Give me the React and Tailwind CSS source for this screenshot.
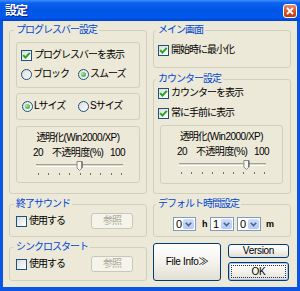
import React from 'react';

// XP-style "設定" dialog

const Check = ({ checked }) => (
  <span className="w-[11px] h-[11px] shrink-0 border border-[#1C5180] bg-linear-to-br from-[#DCDCD7] to-white flex items-center justify-center">
    {checked && (
      <svg width="9" height="9" viewBox="0 0 9 9">
        <path d="M1.2 4.2 L3.4 6.6 L7.8 1.8" fill="none" stroke="#21A121" strokeWidth="1.9" />
      </svg>
    )}
  </span>
);

const Radio = ({ checked }) => (
  <span className="w-[11px] h-[11px] shrink-0 rounded-full border border-[#1C5180] bg-linear-to-br from-[#DCDCD7] to-white flex items-center justify-center">
    {checked && (
      <span className="w-[5px] h-[5px] rounded-full bg-[radial-gradient(circle_at_35%_35%,#A8E59C,#21A121)]" />
    )}
  </span>
);

const CheckRow = ({ checked, label, className = '' }) => (
  <div className={`flex items-center gap-[2px] h-[12px] ${className}`}>
    <Check checked={checked} />
    <span>{label}</span>
  </div>
);

const RadioItem = ({ checked, label, className = '' }) => (
  <div className={`flex items-center gap-[1px] ${className}`}>
    <Radio checked={checked} />
    <span>{label}</span>
  </div>
);

const Group = ({ label, className = '', children }) => (
  <fieldset className={`border border-[#D0D0BF] rounded-[3px] ${className}`}>
    <legend className="px-[2px] -ml-[2px] leading-[12px] text-[#0046D5]">{label}</legend>
    {children}
  </fieldset>
);

// trackbar, 20..100
const Slider = ({ value, className = '' }) => {
  const x = 2 + ((value - 20) / 80) * 83;
  const ticks = Array.from({ length: 9 }, (_, i) => Math.round(2 + (i * 83) / 8));
  return (
    <svg width="88" height="15" className={`block ${className}`}>
      <rect x="0" y="4" width="87" height="1" fill="#A2A192" />
      <rect x="0" y="5" width="87" height="1" fill="#DAD8CC" />
      <rect x="0" y="6" width="87" height="1" fill="#FFFFFF" />
      {ticks.map((t) => (
        <rect key={t} x={t} y="13" width="1" height="2" fill="#6F6F6F" />
      ))}
      <path
        d={`M${x - 2.5} 1.5 H${x + 2.5} V8 L${x} 10.5 L${x - 2.5} 8 Z`}
        fill="#F6F6F2"
        stroke="#8A8A84"
      />
      <line x1={x + 2.5} y1="1.5" x2={x + 2.5} y2="8" stroke="#55554F" />
    </svg>
  );
};

const Opacity = ({ value, sliderClass, className = '' }) => (
  <div className={`border border-[#D0D0BF] rounded-[3px] ${className}`}>
    <div className="text-center mt-[5px]">
      透明化<span className="tracking-[-0.5px]">(Win2000/XP)</span>
    </div>
    <div className="flex pl-[16px] mt-[3px] tracking-[-0.6px]">
      <span className="w-[19px]">20</span>
      <span className="w-[58px]">不透明度(%)</span>
      <span>100</span>
    </div>
    <Slider value={value} className={`mt-[1px] ${sliderClass}`} />
  </div>
);

const Combo = ({ value, className = '' }) => (
  <div className={`flex h-[14px] border border-[#7F9DB9] bg-white p-[1px] ${className}`}>
    <span className="flex-1 pl-[1px] leading-[11px] text-[11px]">{value}</span>
    <span className="w-[11px] h-full rounded-[2px] bg-linear-to-b from-[#CFDDFC] to-[#B1C8F8] flex items-center justify-center">
      <svg width="7" height="5" viewBox="0 0 7 5">
        <path d="M0.8 0.8 L3.5 3.5 L6.2 0.8" fill="none" stroke="#4D6185" strokeWidth="1.6" />
      </svg>
    </span>
  </div>
);

const btn =
  'border border-[#003C74] rounded-[3px] bg-linear-to-b from-white via-[#F4F3EE] to-[#E2DFD2] flex items-center justify-center tracking-[-0.3px]';

const Disabled = ({ label }) => (
  <div className="w-[42px] h-[16px] border border-[#C9C7BA] rounded-[3px] bg-[#F5F4EA] text-[#ACA899] flex items-center justify-center">
    {label}
  </div>
);

export default function App() {
  return (
    <div className="w-[300px] h-[291px] flex flex-col bg-[#0A55E3] font-['Liberation_Sans','Noto_Sans_CJK_JP',sans-serif] text-[10px] leading-[12px] tracking-[-1px] text-black">
      {/* title bar */}
      <div className="h-[21px] shrink-0 flex items-center justify-between pl-[5px] pr-[3px] bg-[linear-gradient(to_bottom,#3D8EFB_0%,#0A62EE_14%,#0055E5_50%,#0059EC_82%,#0042D4_100%)]">
        <span className="text-white text-[12px] font-bold leading-[14px] [text-shadow:1px_1px_0_#0A1E7A]">設定</span>
        <span className="w-[14px] h-[14px] rounded-[3px] border border-white bg-linear-to-b from-[#E98A6A] via-[#D8572B] to-[#C0390E] flex items-center justify-center">
          <svg width="8" height="8" viewBox="0 0 8 8">
            <path d="M1 1 L7 7 M7 1 L1 7" stroke="white" strokeWidth="1.8" />
          </svg>
        </span>
      </div>

      {/* body */}
      <div className="flex-1 mx-[3px] mb-[4px] bg-[#ECE9D8] flex gap-[6px] px-[6px]">
        {/* left column */}
        <div className="w-[138px] flex flex-col">
          <Group label="プログレスバー設定" className="mt-[3px] pl-[6px] pr-[6px] pt-[6px] pb-[10px]">
            <div className="border border-[#D0D0BF] rounded-[3px] pl-[4px] pt-[6px] pb-[7px]">
              <CheckRow checked label="プログレスバーを表示" />
              <div className="flex mt-[7px] h-[12px] items-center">
                <RadioItem label="ブロック" className="w-[57px]" />
                <RadioItem checked label="スムーズ" />
              </div>
            </div>
            <div className="border border-[#D0D0BF] rounded-[3px] pl-[5px] pt-[6px] pb-[7px] mt-[5px]">
              <div className="flex h-[12px] items-center">
                <RadioItem checked label="Lサイズ" className="w-[56px]" />
                <RadioItem label="Sサイズ" />
              </div>
            </div>
            <Opacity value={60} sliderClass="ml-[19px]" className="mt-[6px] h-[57px]" />
          </Group>

          <Group label="終了サウンド" className="mt-[4px] pl-[6px] pr-[6px] pt-[3px] pb-[7px]">
            <div className="flex items-center">
              <CheckRow label="使用する" className="w-[75px]" />
              <Disabled label="参照" />
            </div>
          </Group>

          <Group label="シンクロスタート" className="mt-[4px] pl-[6px] pr-[6px] pt-[3px] pb-[8px]">
            <div className="flex items-center">
              <CheckRow label="使用する" className="w-[75px]" />
              <Disabled label="参照" />
            </div>
          </Group>
        </div>

        {/* right column */}
        <div className="w-[138px] flex flex-col">
          <Group label="メイン画面" className="mt-[3px] pl-[4px] pr-[4px] pt-[8px] pb-[11px]">
            <CheckRow checked label="開始時に最小化" />
          </Group>

          <Group label="カウンター設定" className="mt-[5px] pl-[4px] pr-[4px] pt-[2px] pb-[9px]">
            <CheckRow checked label="カウンターを表示" />
            <CheckRow checked label="常に手前に表示" className="mt-[8px]" />
            <Opacity value={83} sliderClass="ml-[18px]" className="mt-[6px] ml-[2px] mr-[3px] h-[59px]" />
          </Group>

          <Group label="デフォルト時間設定" className="mt-[4px] pl-[4px] pr-[4px] pt-[7px] pb-[5px]">
            <div className="flex items-center ml-[15px] tracking-[0px]">
              <Combo value="0" className="w-[23px]" />
              <span className="ml-[6px] w-[8px] text-[9px] font-bold">h</span>
              <Combo value="1" className="w-[24px]" />
              <Combo value="0" className="w-[24px] ml-[3px]" />
              <span className="ml-[5px] text-[9px] font-bold">m</span>
            </div>
          </Group>

          <div className="flex mt-[6px] gap-[7px]">
            <div className={`${btn} w-[68px] h-[38px]`}>File Info≫</div>
            <div className="flex flex-col w-[61px] pt-[1px]">
              <div className={`${btn} h-[14px]`}>Version</div>
              <div className={`${btn} h-[19px] mt-[4px] p-[2px] shadow-[inset_0_0_0_1px_#A9C2F0]`}>
                <div className="w-full h-full border border-dotted border-[#333] flex items-center justify-center">OK</div>
              </div>
            </div>
          </div>
        </div>
      </div>
    </div>
  );
}
